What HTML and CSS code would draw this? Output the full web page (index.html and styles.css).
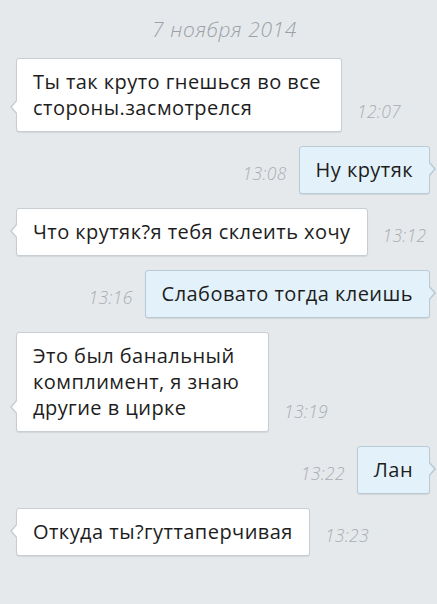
FILE: index.html
```html
<!DOCTYPE html>
<html lang="ru">
<head>
  <meta charset="UTF-8">
  <meta name="viewport" content="width=device-width, initial-scale=1.0">
  <title>Сообщения</title>
  <link rel="stylesheet" href="styles.css">
</head>
<body>

  <div class="chat">
    <div class="date">7 ноября 2014</div>

    <!-- Переписка -->
    <div class="row in">
      <div class="bubble wrap-lg">Ты так круто гнешься во все<br>стороны.засмотрелся</div>
      <span class="time">12:07</span>
    </div>

    <div class="row out">
      <span class="time">13:08</span>
      <div class="bubble">Ну крутяк</div>
    </div>

    <div class="row in">
      <div class="bubble">Что крутяк?я тебя склеить хочу</div>
      <span class="time">13:12</span>
    </div>

    <div class="row out">
      <span class="time">13:16</span>
      <div class="bubble">Слабовато тогда клеишь</div>
    </div>

    <div class="row in">
      <div class="bubble wrap-md">Это был банальный<br>комплимент, я знаю<br>другие в цирке</div>
      <span class="time">13:19</span>
    </div>

    <div class="row out">
      <span class="time">13:22</span>
      <div class="bubble">Лан</div>
    </div>

    <div class="row in">
      <div class="bubble">Откуда ты?гуттаперчивая</div>
      <span class="time">13:23</span>
    </div>
  </div>

</body>
</html>
```

FILE: styles.css
```css
/* Variables */
:root {
  --bg-color: #e6e9ec;
  --text-color: #1d1d1d;
  --time-color: #a9aeb3;
  --in-fill: #ffffff;
  --in-border: #c8cdd2;
  --out-fill: #e3f2fa;
  --out-border: #b7cad6;
}

body {
  margin: 0;
  background-color: var(--bg-color);
  font-family: 'Open Sans', 'Noto Sans', sans-serif;
  color: var(--text-color);
}

.chat {
  display: flex;
  flex-direction: column;
  gap: 14px;
  padding: 14px 0 40px;
}

.date {
  text-align: center;
  padding-left: 12px;
  font-size: 21px;
  font-style: italic;
  font-weight: 300;
  letter-spacing: 0.6px;
  color: #9ba1a7;
  line-height: 30px;
}

/* Rows */
.row {
  display: flex;
  align-items: flex-end;
  gap: 15px;
}

.row.in {
  padding-left: 16px;
}

.row.out {
  justify-content: flex-end;
  padding-right: 7px;
  gap: 12px;
}

.time {
  font-size: 17.5px;
  font-style: italic;
  font-weight: 300;
  letter-spacing: 0.3px;
  color: var(--time-color);
  line-height: 26px;
  margin-bottom: 8px;
}

/* Bubbles */
.bubble {
  position: relative;
  box-sizing: border-box;
  font-size: 20px;
  letter-spacing: 0.45px;
  line-height: 26px;
  padding: 10px 16px;
  border-radius: 3px;
  white-space: nowrap;
  box-shadow: 0 1px 1px rgba(0, 0, 0, 0.08);
}

/* wrapped messages keep the full bubble width */
.bubble.wrap-lg {
  width: 326px;
}

.bubble.wrap-md {
  width: 253px;
}

.in .bubble {
  background-color: var(--in-fill);
  border: 1px solid var(--in-border);
}

.out .bubble {
  background-color: var(--out-fill);
  border: 1px solid var(--out-border);
}

.bubble::before,
.bubble::after {
  content: '';
  position: absolute;
  bottom: 16px;
  width: 7px;
  height: 16px;
}

.bubble::after {
  bottom: 17px;
  width: 6px;
  height: 14px;
}

.in .bubble::before {
  left: -7px;
  background-color: var(--in-border);
  clip-path: polygon(100% 0, 0 50%, 100% 100%);
}

.in .bubble::after {
  left: -5px;
  background-color: var(--in-fill);
  clip-path: polygon(100% 0, 0 50%, 100% 100%);
}

.out .bubble::before {
  right: -7px;
  background-color: var(--out-border);
  clip-path: polygon(0 0, 100% 50%, 0 100%);
}

.out .bubble::after {
  right: -5px;
  background-color: var(--out-fill);
  clip-path: polygon(0 0, 100% 50%, 0 100%);
}
```
